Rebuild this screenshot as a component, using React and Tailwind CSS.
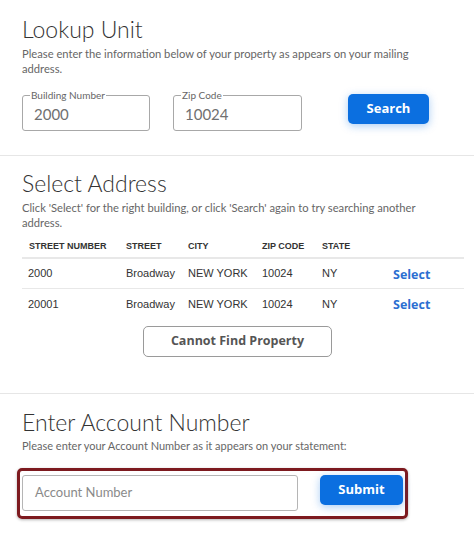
import React from "react";

const head = { fontFamily: "Lato, 'Open Sans', sans-serif" };
const arial = { fontFamily: "'Liberation Sans', Arial, sans-serif" };
const btn = { fontFamily: "'Open Sans', Lato, sans-serif" };

function Field({ label, value, className }) {
  return (
    <fieldset className={"border border-[#a8a8a8] rounded-[3px] px-[9px] pb-[6px] pt-0 m-0 " + className}>
      <legend className="px-[1px] ml-[-2px] text-[10px] leading-[10px] text-[#666]" style={head}>{label}</legend>
      <div className="text-[15px] leading-[20px] text-[#707070] mt-[4px] pl-[2px]" style={head}>{value}</div>
    </fieldset>
  );
}

const rows = [
  ["2000", "Broadway", "NEW YORK", "10024", "NY"],
  ["20001", "Broadway", "NEW YORK", "10024", "NY"],
];

export default function App() {
  return (
    <div className="w-[474px] h-[555px] bg-white overflow-hidden text-[#333]">
      {/* Lookup Unit */}
      <section className="pl-[22px] pr-[10px] pt-[15px] h-[156px] border-b border-[#e6e6e6]">
        <h1 className="text-[23px] leading-[28px] font-light text-[#333]" style={head}>Lookup Unit</h1>
        <p className="mt-[3px] text-[11.2px] leading-[15px] text-[#666] w-[420px]" style={head}>
          Please enter the information below of your property as appears on your mailing address.
        </p>
        <div className="flex items-start mt-[14px]">
          <Field label="Building Number" value="2000" className="w-[128px] h-[41px]" />
          <Field label="Zip Code" value="10024" className="w-[129px] h-[41px] ml-[23px]" />
          <button className="ml-[46px] mt-[4px] w-[81px] h-[30px] rounded-[5px] bg-[#0b6fe0] text-white text-[13px] font-bold shadow-[0_2px_8px_rgba(11,111,224,0.35)]" style={btn}>
            Search
          </button>
        </div>
      </section>

      {/* Select Address */}
      <section className="pl-[22px] pr-[10px] pt-[13px] h-[238px] border-b border-[#e6e6e6]">
        <h2 className="text-[23px] leading-[28px] font-light text-[#333]" style={head}>Select Address</h2>
        <p className="mt-[3px] text-[11.2px] leading-[15px] text-[#666] w-[420px]" style={head}>
          Click 'Select' for the right building, or click 'Search' again to try searching another address.
        </p>
        <div className="mt-[7px] w-[442px]">
          <div className="flex items-center h-[22px] border-b-2 border-[#e8e8e8] text-[9px] font-bold text-[#333]" style={arial}>
            <span className="w-[104px] pl-[7px]">STREET NUMBER</span>
            <span className="w-[62px]">STREET</span>
            <span className="w-[74px]">CITY</span>
            <span className="w-[60px]">ZIP CODE</span>
            <span className="w-[60px]">STATE</span>
          </div>
          {rows.map((r, i) => (
            <div key={i} className={"flex items-center h-[30px] text-[11px] text-[#333] " + (i === 0 ? "border-b border-[#e8e8e8]" : "")} style={arial}>
              <span className="w-[104px] pl-[6px]">{r[0]}</span>
              <span className="w-[62px]">{r[1]}</span>
              <span className="w-[74px]">{r[2]}</span>
              <span className="w-[60px]">{r[3]}</span>
              <span className="w-[71px]">{r[4]}</span>
              <span className="text-[12.5px] font-bold text-[#2c6fd1] mt-[3px]" style={btn}>Select</span>
            </div>
          ))}
        </div>
        <div className="flex mt-[7px]">
          <button className="ml-[121px] w-[189px] h-[31px] rounded-[5px] border border-[#9a9a9a] text-[12.5px] font-bold text-[#555]" style={btn}>
            Cannot Find Property
          </button>
        </div>
      </section>

      {/* Enter Account Number */}
      <section className="pl-[17px] pr-[10px] pt-[14px]">
        <h2 className="pl-[5px] text-[23px] leading-[28px] font-light text-[#333]" style={head}>Enter Account Number</h2>
        <p className="pl-[5px] mt-[3px] text-[11px] leading-[14px] text-[#666]" style={head}>
          Please enter your Account Number as it appears on your statement:
        </p>
        <div className="mt-[15px] w-[391px] h-[51px] border-[3px] border-[#7d1a1f] rounded-[5px] flex items-start pl-[2px] pt-[4px] shadow-[0_1px_3px_rgba(0,0,0,0.3)]">
          <div className="w-[276px] h-[36px] border border-[#b5b5b5] rounded-[3px] flex items-center pl-[12px] text-[13px] text-[#8a8a8a]" style={head}>
            Account Number
          </div>
          <button className="ml-[22px] w-[83px] h-[30px] rounded-[5px] bg-[#0b6fe0] text-white text-[13px] font-bold shadow-[0_2px_8px_rgba(11,111,224,0.35)]" style={btn}>
            Submit
          </button>
        </div>
      </section>
    </div>
  );
}
